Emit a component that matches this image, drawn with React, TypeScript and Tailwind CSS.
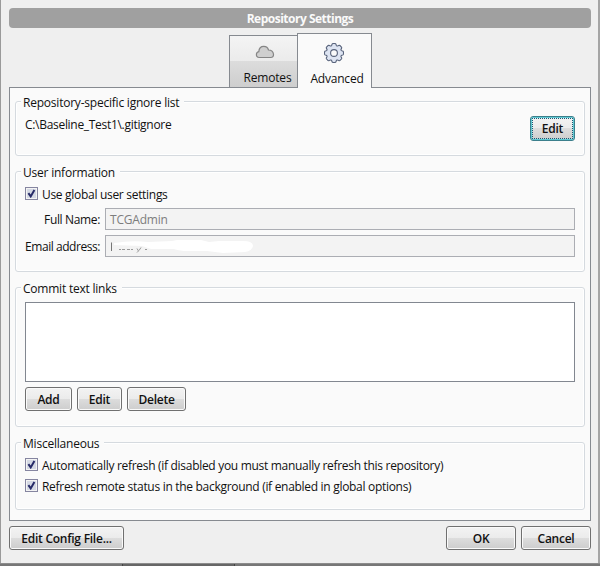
import type { ReactNode } from "react";
import clsx from "clsx";

// Eight soft lobes around a 20x20 box
const gearPoints = Array.from({ length: 160 }, (_, i) => {
  const a = (i / 160) * Math.PI * 2;
  const r = 8.5 + 1.0 * Math.tanh(2.4 * Math.cos(8 * a) + 1.1);
  return `${(10 + r * Math.cos(a)).toFixed(2)},${(10 + r * Math.sin(a)).toFixed(2)}`;
}).join(" ");

function GroupBox({ title, className, children }: { title: string; className?: string; children: ReactNode }) {
  return (
    <section className={clsx("rounded-[3px] border border-[#d5dadf] px-[9px] shadow-[inset_0_0_0_1px_#fff]", className)}>
      <h2 className="-mt-[8px] -ml-[4px] h-[16px] w-fit bg-[#fafafa] pt-px pr-[5px] pl-[2px] tracking-[-0.22px]">{title}</h2>
      {children}
    </section>
  );
}

function Button({ children, className, focused }: { children: ReactNode; className?: string; focused?: boolean }) {
  return (
    <button
      className={clsx(
        "flex items-center justify-center rounded-[3px] border bg-[linear-gradient(#f3f3f3,#ebebeb_50%,#dddddd_50%,#cdcdcd)] text-[12px] font-semibold tracking-[-0.25px]",
        focused ? "border-[#3c7f8c] p-px shadow-[inset_0_0_0_1px_#5fc9d3]" : "border-[#707070] pt-[2px] shadow-[inset_0_0_0_1px_#fafafa]",
        className,
      )}
    >
      {focused ? (
        <span className="flex h-full w-full items-center justify-center border border-dotted border-[#1d5873]">{children}</span>
      ) : (
        children
      )}
    </button>
  );
}

function Checkbox({ label }: { label: string }) {
  return (
    <label className="flex h-[13px] items-center gap-[4px]">
      <span className="flex h-[13px] w-[13px] shrink-0 border border-[#8585a0] bg-[#f4f4f4] p-px">
        <svg viewBox="0 0 9 9" className="h-[9px] w-[9px] bg-[#d5d9e4]">
          <path d="M1.4 4.2 3.7 7.4 7.4 1" fill="none" stroke="#272b68" strokeWidth="2" />
        </svg>
      </span>
      <span className="pt-[3px] whitespace-nowrap">{label}</span>
    </label>
  );
}

function CloudIcon() {
  return (
    <svg viewBox="0 0 20 14" className="h-[14px] w-[20px]">
      <path
        d="M4.2 12.5C2.2 12.5 1.4 11 1.4 9.7c0-1.7 1-2.7 2.4-3C4 3.3 6 1.3 8.8 1.3c2.5 0 4.1 1.4 4.7 3.7 2.8.1 4.7 1.8 5 4.3.2 1.8-.8 3.2-2.8 3.2Z"
        fill="#cfcfcf"
        stroke="#858585"
        strokeWidth="1.2"
      />
    </svg>
  );
}

function GearIcon() {
  return (
    <svg viewBox="0 0 20 20" className="h-[20px] w-[20px]" fill="#dde4f2" stroke="#59647c" strokeWidth="1.1" strokeLinejoin="round">
      <polygon points={gearPoints} />
      <circle cx="10" cy="10" r="3.4" fill="#fafafa" />
    </svg>
  );
}

export default function App() {
  return (
    <div className="flex h-[566px] w-[600px] flex-col overflow-hidden bg-[#efefef] font-['Open_Sans','Noto_Sans',sans-serif] text-[12px] leading-[16px] tracking-[-0.3px] text-[#111]">
      <main className="flex h-[563px] flex-col border-r-2 border-l border-r-[#a5a5a5] border-l-[#9a9a9a] pr-[7px] pl-[8px]">
        <h1 className="mt-[8px] flex h-[20px] shrink-0 items-center justify-center rounded-[4px] bg-[#a0a0a0] pt-[2px] font-bold tracking-[-0.5px] text-[#fafafa]">
          Repository Settings
        </h1>

        <nav className="mt-[5px] ml-[220px] flex h-[54px] shrink-0 items-end">
          <div className="flex h-[52px] w-[68px] flex-col items-center border-t border-l border-[#868a90] bg-[linear-gradient(#f4f4f4,#ebebeb_50%,#dcdcdc_50%,#cecece)]">
            <div className="mt-[9px] ml-[3px]">
              <CloudIcon />
            </div>
            <span className="mt-[11px] ml-[8px] tracking-[-0.2px]">Remotes</span>
          </div>
          <div className="relative z-10 -mb-px flex h-[55px] w-[75px] flex-col items-center border-x border-t border-[#868a90] bg-[#fafafa]">
            <div className="mt-[9px] mr-[2px]">
              <GearIcon />
            </div>
            <span className="mt-[8px] ml-[5px] tracking-[-0.2px]">Advanced</span>
          </div>
        </nav>

        <div className="flex h-[434px] shrink-0 flex-col gap-[15px] border border-[#868a90] bg-[#fafafa] px-[5px] pt-[13px]">
          <GroupBox title="Repository-specific ignore list" className="h-[55px] shrink-0">
            <div className="flex justify-between">
              <span className="mt-[7px]">C:\Baseline_Test1\.gitignore</span>
              <Button focused className="mt-[6px] h-[25px] w-[45px]">
                Edit
              </Button>
            </div>
          </GroupBox>

          <GroupBox title="User information" className="h-[101px] shrink-0">
            <div className="mt-[7px]">
              <Checkbox label="Use global user settings" />
            </div>
            <div className="mt-[8px] grid grid-cols-[75px_470px] gap-x-[5px] gap-y-[5px]">
              <span className="self-center pt-[2px] text-right tracking-[-0.35px] whitespace-nowrap">Full Name:</span>
              <div className="flex h-[22px] items-center border border-[#abadb3] bg-[#f3f3f3] pt-[2px] pl-[4px] tracking-[-0.2px] text-[#7d7d7d]">
                TCGAdmin
              </div>
              <span className="self-center pt-[2px] text-right tracking-[-0.45px] whitespace-nowrap">Email address:</span>
              <div className="flex h-[22px] items-center border border-[#abadb3] bg-[#f3f3f3]">
                <svg viewBox="0 0 150 20" className="h-[20px] w-[150px]">
                  <path d="M5.5 6.5v8.5" stroke="#777" />
                  <path d="M13 13.5h2m1 0h3m2 0h3m1 0h2m4-1 1.5 2.5-1.5 1.5m2-2 2-3m4 2h2" stroke="#999" fill="none" />
                  <path d="M8 7q18-3 34-1l24-1 5-1h24l8 2 10-1h24q10 0 10 5-1 5-8 6l-22 1-16-2H78q-8-1-10-2H45l-9-3-28-1Z" fill="#fff" />
                </svg>
              </div>
            </div>
          </GroupBox>

          <GroupBox title="Commit text links" className="h-[140px] shrink-0">
            <div className="mt-[6px] h-[80px] border border-[#828790] bg-white" />
            <div className="mt-[5px] flex gap-[5px]">
              <Button className="h-[24px] w-[47px]">Add</Button>
              <Button className="h-[24px] w-[45px]">Edit</Button>
              <Button className="h-[24px] w-[59px]">Delete</Button>
            </div>
          </GroupBox>

          <GroupBox title="Miscellaneous" className="h-[68px] shrink-0">
            <div className="mt-[7px] flex flex-col gap-[8px]">
              <Checkbox label="Automatically refresh (if disabled you must manually refresh this repository)" />
              <Checkbox label="Refresh remote status in the background (if enabled in global options)" />
            </div>
          </GroupBox>
        </div>

        <footer className="mt-[5px] flex gap-[5px]">
          <Button className="mr-auto h-[24px] w-[115px]">Edit Config File...</Button>
          <Button className="h-[24px] w-[70px]">OK</Button>
          <Button className="h-[24px] w-[70px]">Cancel</Button>
        </footer>
      </main>
      <div className="flex h-[3px] border-t border-[#8c8c8c] bg-[#777]">
        <div className="ml-[122px] w-[113px] border-x border-[#444] bg-[#666]" />
      </div>
    </div>
  );
}
